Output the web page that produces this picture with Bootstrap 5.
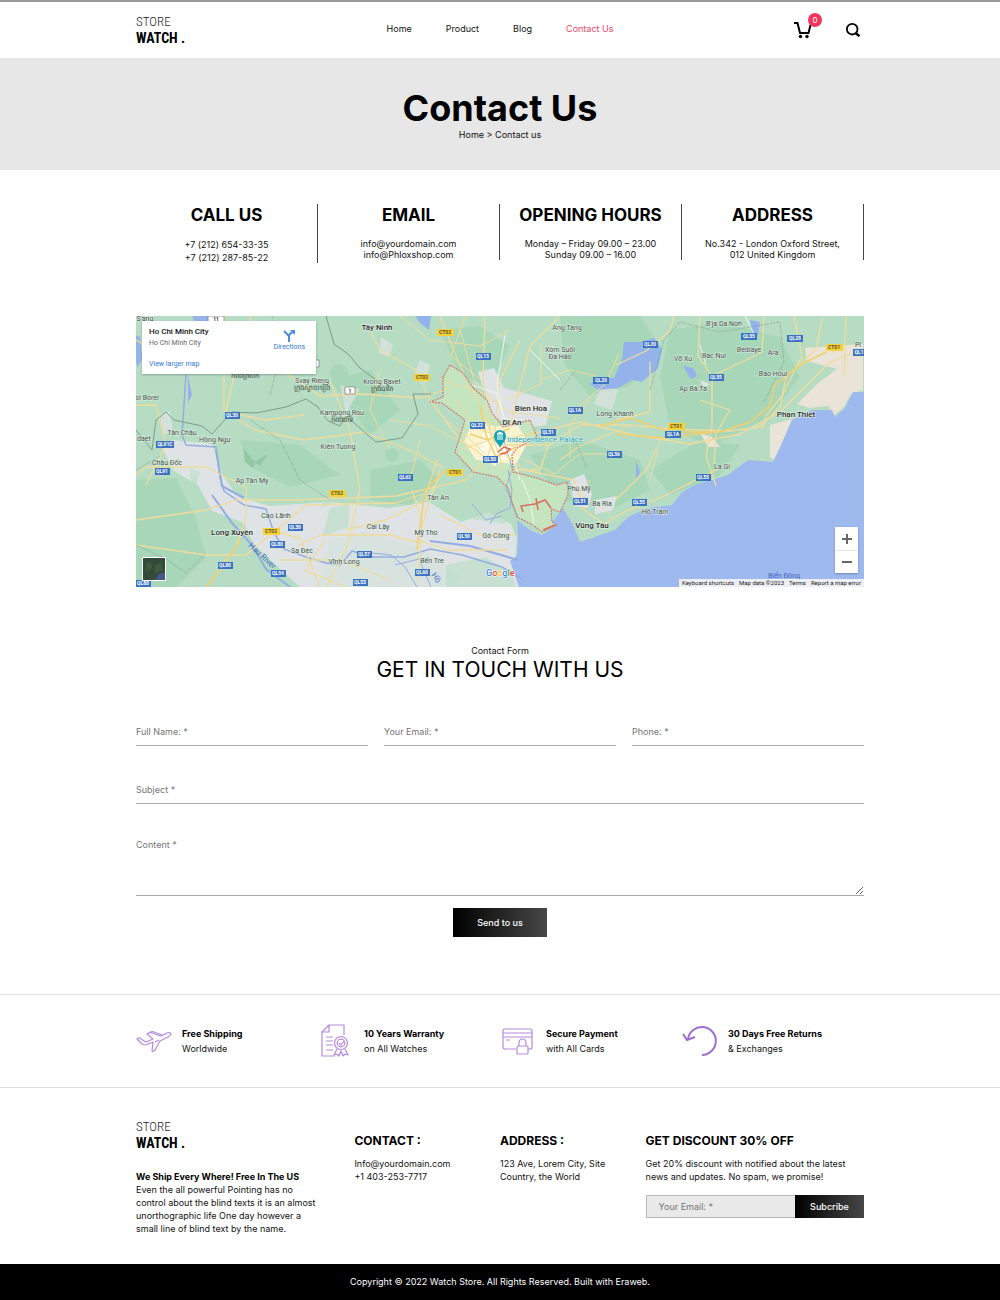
<!DOCTYPE html>
<html lang="en">
<head>
<meta charset="utf-8">
<meta name="viewport" content="width=device-width, initial-scale=1">
<title>Store Watch – Contact Us</title>
<link href="https://cdn.jsdelivr.net/npm/bootstrap@5.3.0/dist/css/bootstrap.min.css" rel="stylesheet">
<style>
  body { font-family: Inter, "Open Sans", sans-serif; font-size: 9px; line-height: 13px; color: #111; background: #fff; }
  a { color: inherit; text-decoration: none; }
  .shell { width: 100%; max-width: 728px; margin-inline: auto; }
  .site-head { border-top: 2px solid #999; height: 58px; }
  .brand { display: inline-block; font-family: "Liberation Sans Narrow", "Roboto Condensed", "Open Sans Condensed", "DejaVu Sans Condensed", sans-serif; font-size: 13px; line-height: 16px; font-weight: 300; color: #222; }
  .brand strong { display: block; font-size: 14px; font-weight: 700; color: #000; }
  .main-nav { gap: 34px; }
  .main-nav .nav-link { padding: 0; color: #111; }
  .main-nav .nav-link.active { color: #e8486b; }
  .icon-btn { border: 0; padding: 0; background: none; line-height: 0; position: relative; }
  .cart-count { position: absolute; left: 14px; top: -8px; width: 14px; height: 14px; border-radius: 50%; background: #f2355f; color: #fff; font-size: 8px; line-height: 14px; text-align: center; }
  .hero { background: #e7e7e8; height: 112px; padding-top: 30px; }
  .hero h1 { font-size: 36px; line-height: 40px; font-weight: 700; margin: 0; color: #000; }
  .info { padding-top: 34px; height: 146px; }
  .info-item { border-right: 1px solid #444; text-align: center; height: 56px; }
  .info-item h2 { font-size: 17px; line-height: 22px; font-weight: 700; margin: 0 0 12px; color: #000; }
  .info-item p { margin: 0; line-height: 11px; }
  .info-item.info-tall { height: 59px; }
  .info-item.info-tall p { line-height: 13px; }
  .map-box { position: relative; background: #b3dcc0; overflow: hidden; font-family: Roboto, sans-serif; }
  .map-box > svg { display: block; width: 100%; height: auto; }
  .map-card { position: absolute; left: 6px; top: 5px; width: 174px; height: 53px; padding: 5px 11px 4px 7px; background: #fff; box-shadow: 0 1px 2px #0004; font-size: 7px; line-height: 11px; color: #666; }
  .map-card b { font-size: 8px; line-height: 12px; font-weight: 500; color: #111; }
  .map-card a { color: #2f7bdc; }
  .map-thumb { position: absolute; left: 6px; bottom: 6px; width: 24px; height: 24px; border: 1px solid #fff; padding: 0; line-height: 0; }
  .map-zoom { position: absolute; right: 6px; bottom: 14px; width: 23px; background: #fff; box-shadow: 0 1px 2px #0004; }
  .map-zoom button { display: block; width: 23px; height: 23px; border: 0; padding: 5px; background: none; line-height: 0; }
  .map-zoom button + button { border-top: 1px solid #e6e6e6; }
  .map-legal { position: absolute; right: 0; bottom: 0; background: #eceef3; color: #222; font-size: 6px; line-height: 8px; padding: 0 3px; gap: 5px; }
  .form-area { padding-top: 57px; height: 407px; }
  .form-area h2 { font-size: 21px; line-height: 26px; font-weight: 400; margin: 0 0 34px; color: #000; }
  .line-field { display: block; width: 100%; border: 0; border-bottom: 1px solid #aaa; border-radius: 0; background: none; padding: 0; height: 29px; font-size: 9px; line-height: 13px; color: #111; outline: 0; }
  .line-field::placeholder, .mail-field::placeholder { color: #757575; opacity: 1; }
  .subject-field { margin-top: 29px; }
  .line-area { height: 61px; padding-top: 3px; margin-top: 31px; resize: vertical; }
  .dark-btn { border: 0; border-radius: 0; color: #fff; background: linear-gradient(90deg, #000, #474747); font-size: 9px; line-height: 13px; font-weight: 500; }
  .send-btn { width: 94px; height: 29px; margin-top: 12px; }
  .perks { border-top: 1px solid #ddd; border-bottom: 1px solid #ddd; height: 94px; padding-top: 28px; }
  .perk-icon { width: 46px; height: 36px; flex: none; fill: none; stroke: #b48add; }
  .perk-text { line-height: 15px; padding-top: 3px; }
  .perk-text b { font-weight: 700; color: #000; display: block; }
  .foot { padding-top: 31px; height: 176px; }
  .foot-logo-col { width: 30%; }
  .foot-col { width: 20%; padding-top: 15px; }
  .foot-news { width: 30%; padding-top: 15px; }
  .foot h3 { font-size: 12px; line-height: 14px; font-weight: 700; margin: 0 0 9px; color: #000; }
  .foot p { margin: 0; }
  .ship-note { padding-top: 3px; }
  .mail-field { flex: 1 1 0; min-width: 0; height: 23px; border: 1px solid #bbb; border-right: 0; border-radius: 0; background: #e9e9e9; padding: 0 12px; font-size: 9px; }
  .sub-btn { width: 69px; height: 23px; }
  .copy { background: #000; color: #fff; height: 36px; line-height: 36px; text-align: center; }
</style>
<script src="https://cdn.jsdelivr.net/npm/bootstrap@5.3.0/dist/js/bootstrap.bundle.min.js"></script>
</head>
<body>
<header class="site-head">
  <div class="shell d-flex pt-2">
    <div class="flex-fill w-25 pt-1"><a class="brand" href="#">STORE<strong>WATCH .</strong></a></div>
    <nav class="nav main-nav justify-content-center align-items-center">
      <a class="nav-link" href="#">Home</a>
      <a class="nav-link" href="#">Product</a>
      <a class="nav-link" href="#">Blog</a>
      <a class="nav-link active" href="#" aria-current="page">Contact Us</a>
    </nav>
    <div class="flex-fill w-25 d-flex justify-content-end align-items-center pe-1 pt-1">
      <button class="icon-btn me-4" type="button" aria-label="Cart">
        <svg width="28" height="18" viewBox="0 0 28 18" fill="none" stroke="#000" stroke-width="2"><path d="M0 2h3.500l2.500 10h8.500l2-8"/><circle cx="6.500" cy="15.500" r="1.700" fill="#000" stroke="none"/><circle cx="13" cy="15.500" r="1.700" fill="#000" stroke="none"/></svg>
        <span class="cart-count">0</span>
      </button>
      <button class="icon-btn" type="button" aria-label="Search">
        <svg width="14" height="14" viewBox="0 0 14 14" fill="none" stroke="#000" stroke-width="1.800"><circle cx="6.200" cy="6.200" r="5.300"/><path d="M9.500 10l4 3.200" stroke-width="2.400"/></svg>
      </button>
    </div>
  </div>
</header>

<section class="hero text-center">
  <h1>Contact Us</h1>
  <nav aria-label="Breadcrumb"><a href="#">Home</a> &gt; <span>Contact us</span></nav>
</section>

<main>
  <section class="shell info">
    <div class="row g-0 align-items-start">
      <div class="col-3 info-item info-tall"><h2>CALL US</h2><p>+7 (212) 654-33-35<br>+7 (212) 287-85-22</p></div>
      <div class="col-3 info-item"><h2>EMAIL</h2><p>info@yourdomain.com<br>info@Phloxshop.com</p></div>
      <div class="col-3 info-item"><h2>OPENING HOURS</h2><p>Monday – Friday 09.00 – 23.00<br>Sunday 09.00 – 16.00</p></div>
      <div class="col-3 info-item"><h2>ADDRESS</h2><p>No.342 - London Oxford Street,<br>012 United Kingdom</p></div>
    </div>
  </section>

  <section class="shell map-box" aria-label="Map of Ho Chi Minh City">
    <svg viewBox="136 316 728 271" font-family="Roboto, 'Noto Sans', sans-serif">
      <rect x="136" y="316" width="728" height="271" fill="#b6ddc4"/>
      <!-- forests -->
      <g fill="#a8d6b9">
        <path d="M560 316h80l20 30-30 40-40 10-25-30zM670 330l50-8 60 15 20 40-30 40-60 30-40-20-10-50zM440 330l40-4 30 20-20 40-30-10z"/>
        <path d="M136 480l40-2 20 40 10 40-30 29h-40zM240 440l60 5 40 30-50 12-40-20zM330 380l40-10 30 40-30 25zM530 455l50-15 60 20 10 30-40 20-50-10zM650 470l50-30 40 5-20 30-50 20zM370 470l50-10 20 20-30 25-40-5z"/>
        <circle cx="392" cy="455" r="7"/><circle cx="339" cy="373" r="9"/><circle cx="462" cy="350" r="10"/>
        <path d="M243 448l12 14-2 6-8-6zM268 454l-8 12-6-4z" fill="#93c8a6"/>
      </g>
      <!-- farmland and delta -->
      <g fill="#e0e3e5">
        <path d="M162 448l10-8 40 4 10 30 15 22 32 10 60-4 60 6 40-6 32 20 28-10 22 12 6 15-2 20 4 28H300l-46-42-10-22-32-12-14-26-24-14z"/>
        <path d="M478 372l16-4 10 20 20 5 28 8-6 24-30 4-24-14zM700 380l10 4-6 4zM570 480l14-6 8 20-4 14-14-2zM595 500l22-4-4 14-18 4z"/>
        <path d="M420 360l10 5-4 18-12-8zM160 415l10-4 3 20-10 4zM340 385l20 4-14 24zM602 384l16 6-6 20-18-6zM381 337l12 8-4 12-10-4z" opacity=".7"/>
      </g>
      <path d="M321 508l14-6-10-6zM190 468l10 4-4 16-6-6zM330 508l20-5-2 24-26 10zM440 480l60-8 18 28-14 24-52-8-20-20z" fill="#b6ddc4" opacity=".6"/>
      <path d="M330 540l36-8 50 14 46 30-14 11h-130z" fill="#c8e0d0" opacity=".3"/>
      <path d="M446 565l40-8 26 18 4 12h-70z" fill="#b6ddc4" opacity=".6"/>
      <!-- beaches -->
      <g fill="#e9e3d8"><path d="M805 348l58-4v46l-12 4-8 14-10 8-4-10-20 2-12-4 20-20 20-15-30-8zM770 425l22-6-10 24-6 18-6-4zM700 433l12 4 8 10-12 0z"/></g>
      <!-- sea -->
      <path d="M864 392l-11 0-8 16-10 9-3-7-20 0-20 10-10 23-9 19-25-2-20 15-33 10-13 7-10 13-24 3-20 9-13 13-35 12-7-17-10-17-13 17 7 0-15 10-12-5-13-10 1 15-1 21-7 5 10 29h344z" fill="#9db9ee"/>
      <!-- Ho Chi Minh City -->
      <path d="M443 377L450 365 463 373 473 388 487 400 492 413 503 427 530 420 537 437 517 448 512 455 513 472 537 478 557 485 567 482 568 495 560 512 551 509 552 522 557 525 542 532 533 525 517 517 512 502 508 488 497 477 473 472 455 452 465 420 442 403 430 402 443 397z" fill="#c4e5c0"/>
      <path d="M472 422l22 4 24 0 10 16-12 22-40-4-12-18z" fill="#fbf3cf"/>
      <path d="M484 432l22 0 6 22-18 12-14-14z" fill="#fffbe9"/>
      <!-- lakes -->
      <path d="M624 342l16 0 14-4 8 12-4 18-16 14-10-2-14 8-20 2-8-6 8-6 16 0 8-18zM683 366l10 2 4 8-6 3zM636 460l4 12-4 8zM750 320l10 2-2 14-6-4zM415 316h16l-2 14-8-6zM192 316h20l-4 5h-14zM136 335l4 2 2 22-4 8-2-5zM188 375l4 20-4 8z" fill="#94b3ea"/>
      <!-- rivers -->
      <g fill="none" stroke="#94ade0">
        <path d="M186 375l-4 60 4 10 30 2 4 30 4 14 20 14 22 4 8 24 10 16 22 8 20 6 14 2 12-14 20 6 32 0 26-8 32 6 40 12 20 12" stroke-width="1.500"/>
        <path d="M212 495l20 28 20 22 14 24 24 18M216 450l6 36 22 12M430 541l40 5 48 14" stroke-width="2"/>
        <path d="M371 553l20 2 14 12 12 20M395 565l24-6 12 28M508 470l4 20-2 18-14 6-6 10M472 504l14 16 16-4M504 440l8 28-6 20 12 30" stroke-width="1"/>
      </g>
      <!-- roads -->
      <g fill="none" stroke="#efdc9c" stroke-width="1.300" stroke-linejoin="round">
        <path d="M136 340l50 30 38 0 0 40 30 20 50 10 60-8 50 20 30 16M224 316l10 60-8 36 40 8 38-5M136 520l70-10 30-10 60 0 100-4 70-16 20-20 12-30M136 545l70 10 40 0 60-50 90-2 30-10 12-34M206 587l30-40 10-30 0-30-40-20-60 0-10 8"/>
        <path d="M250 316l10 40 60 40 40-2 60 4 30-10M330 380l20 50 10 60-14 60-20 37M370 330l10 20 36 20 14 30 30 40 30 20M440 316l20 50 20 40 16 40M485 316l-2 60 8 60M520 340l-20 40-6 60 10 30M560 316l-30 30-10 40-10 40"/>
        <path d="M500 440l40-8 40-10 50 12 60 10 50-10 40-22 30-30 20-20 26-10M500 445l50 0 30-20 50 0 40 4 60 2 30-4 20-20 6-30 30-28 6-30M560 460l20-14 50-20M616 365l30-14 24-20 4-15M700 316l-2 40 14 20 0 50-6 30 10 30M712 376l30-14 20-10 2-36M700 400l30 10-14 24-2 30M794 316l8 40-20 40-16 20-4 14M846 316l-2 60M616 420l34-8 0-50"/>
        <path d="M500 450l24 20 50 10 10 30 20 14 20-12 40-16 40-20 24-12M550 440l-10 30-30 0M616 500l30-30 10-20M412 490l10 30-4 60M440 470l-10 30-12 40 30 10 60 0M346 530l40-10 40-20 18-30M300 545l20-10 70 0 30 8M280 560l60 0 50 20M325 540l-20 30 40 17M270 530l30 8 20 49M440 515l40 20 34 0M136 405l20 0 10 40-20 40"/>
        <path d="M460 330l14 50 30 30M440 380l40 12 30 20 50 6M540 380l30-10 26 6M456 400l24 30 20 6M460 450l30-10 40 4M445 420l20 14 20 20M575 410l30-26 14-30M400 316l30 24 50 6 30-16M390 420l40 6 30 16M380 370l-10 40 20 40M420 440l-10 40M465 316l-14 40 30 24M505 400l36-16 0-40M525 460l30 14 24-20 30 0M590 480l-10 14 30 20M660 440l-10 40M590 400l-20 24 0 34" stroke-width="1"/>
      </g>
      <g fill="none" stroke="#f1cf6e" stroke-width="1.500"><path d="M600 426l30-8 40 14 50 0 30-10 20-16 4-20 28-22 24-12M445 470l-20 20-8 60M206 587l20-26 14-20M480 405l6 30 10 22 20-10M616 434l50 4 46-6M470 434l18 6 22-12"/></g>
      <g fill="none" stroke="#eef7ee" stroke-width="1"><path d="M505 335l-8 50 6 30M530 350l30 30M700 345l6 20M522 480l8 20 4 26M520 480l-6-20M472 385l24 8 10 30M745 316l10 20"/></g>
      <!-- borders -->
      <g fill="none" stroke="#7d9c8b" stroke-width="1">
        <path d="M326 316l8 28 14 10 12 14 16 12M136 430l16 20 4-30 10-8 8 8 28 6 10 8 20-22 24 1 30-6 20-8 12 8 10 14 12 5 6-10 30 26 26-4 16-24-5-20 18 0"/>
        <path d="M270 395l10-40-8-39M250 420l30 20 20 40 30 20M136 545l30 14 20 14 20-20M560 390l16-20M650 390l14-50 16-18 40 10 60-10 4 40-20 40M575 440l12 28M136 470l24-14" stroke-dasharray="5 1" opacity=".5"/>
      </g>
      <path d="M443 377L450 365 463 373 473 388 487 400 492 413 503 427 530 420 537 437 517 448 512 455 513 472 537 478 557 485 567 482 568 495 560 512 551 509 552 522 557 525 542 532 533 525 517 517 512 502 508 488 497 477 473 472 455 452 465 420 442 403 430 402 443 397z" fill="none" stroke="#cf7a74" stroke-width="1.200" stroke-dasharray="2 1"/>
      <path d="M498 452l6-5 6 2-4 4-6 1M523 512l-2-6 14-2 10-4 6 8M536 498l2 12M543 530l12-5" fill="none" stroke="#dc6a5c" stroke-width="1.500"/>
      <!-- road shields -->
      <g font-size="5" font-weight="700" text-anchor="middle">
        <path d="M225 412h15v7h-15zM156 441h18v7h-18zM155 468h15v7h-15zM288 524h15v7h-15zM270 541h15v7h-15zM218 562h15v7h-15zM271 570h15v7h-15zM357 551h15v7h-15zM353 579h15v7h-15zM136 580h15v7h-15zM476 353h15v7h-15zM470 422h15v7h-15zM483 456h15v7h-15zM541 429h15v7h-15zM568 407h15v7h-15zM593 377h16v7h-16zM643 341h15v7h-15zM741 333h16v7h-16zM787 335h16v7h-16zM709 374h15v7h-15zM665 431h16v7h-16zM607 451h15v7h-15zM398 474h15v7h-15zM457 533h15v7h-15zM415 569h15v7h-15zM573 498h15v7h-15zM632 499h15v7h-15zM696 474h15v7h-15zM853 349h11v7h-11z" fill="#3c73c0"/>
        <g fill="#fff">
          <text x="232" y="417">QL30</text><text x="165" y="446">QL91C</text><text x="162" y="473">QL91</text><text x="295" y="529">QL30</text><text x="277" y="546">QL80</text><text x="225" y="567">QL80</text><text x="278" y="575">QL54</text><text x="364" y="556">QL57</text><text x="360" y="584">QL53</text><text x="143" y="585">QL80</text><text x="483" y="358">QL13</text><text x="477" y="427">QL22</text><text x="490" y="461">QL50</text><text x="548" y="434">QL51</text><text x="575" y="412">QL1A</text><text x="601" y="382">QL20</text><text x="650" y="346">QL20</text><text x="749" y="338">QL55</text><text x="795" y="340">QL28</text><text x="716" y="379">QL55</text><text x="673" y="436">QL1A</text><text x="614" y="456">QL56</text><text x="405" y="479">QL62</text><text x="464" y="538">QL50</text><text x="422" y="574">QL60</text><text x="580" y="503">QL51</text><text x="639" y="504">QL55</text><text x="703" y="479">QL55</text><text x="859" y="354">QL1</text>
        </g>
        <path d="M437 329h17v7h-17zM414 374h16v7h-16zM447 469h16v7h-16zM329 490h17v7h-17zM263 528h17v7h-17zM668 423h17v7h-17zM826 344h17v7h-17z" fill="#f5d23c"/>
        <g fill="#5c5120"><text x="445" y="334">CT02</text><text x="422" y="379">CT02</text><text x="455" y="474">CT01</text><text x="337" y="495">CT02</text><text x="271" y="533">CT02</text><text x="676" y="428">CT01</text><text x="834" y="349">CT01</text></g>
        <path d="M345 387h10v7h-10zM310 360h9v7h-9z" fill="#fff" stroke="#777" stroke-width=".7"/><text x="350" y="393" fill="#333">1</text><text x="315" y="366" fill="#333">3</text>
        <path d="M208 316h16v6h-16z" fill="#fff" stroke="#777" stroke-width=".7"/><text x="216" y="321" fill="#333">11</text>
      </g>
      <!-- place names -->
      <g font-size="7" fill="#3d4a45" stroke="#e4f2e8" stroke-width="1" paint-order="stroke" text-anchor="middle">
        <text x="145" y="321">S'ang</text><text x="567" y="330">Ang Tang</text><text x="560" y="352">Xóm Suối</text><text x="560" y="359">Đa Hào</text><text x="724" y="326">B'ja Da Noh</text><text x="683" y="361">Võ Xu</text><text x="714" y="358">Bac Nui</text><text x="749" y="352">Bediaye</text><text x="773" y="355">Ara</text><text x="773" y="376">Bao Houi</text><text x="693" y="391">Ap Bà Tá</text><text x="615" y="416">Long Khanh</text><text x="858" y="347">Pl</text>
        <text x="312" y="383">Svay Rieng</text><text x="382" y="384">Krong Bavet</text><text x="342" y="415">Kampong Rou</text><text x="338" y="449">Kiên Tuong</text><text x="182" y="435">Tân Châu</text><text x="215" y="442">Hồng Ngự</text><text x="147" y="400">oi Borei</text><text x="144" y="441">daet</text><text x="167" y="465">Châu Đốc</text><text x="252" y="483">Ap Tân My</text><text x="276" y="518">Cao Lãnh</text><text x="302" y="553">Sa Đéc</text><text x="344" y="564">Vĩnh Long</text><text x="378" y="529">Cai Lậy</text><text x="438" y="500">Tân An</text><text x="426" y="535">Mỹ Tho</text><text x="432" y="563">Bến Tre</text><text x="496" y="538">Gò Công</text><text x="579" y="491">Phú Mỹ</text><text x="602" y="506">Bà Ria</text><text x="655" y="514">Hồ Tràm</text><text x="722" y="469">La Gi</text>
        <g font-size="7" stroke="none"><text x="312" y="390">ក្រុងស្វាយរៀង</text><text x="382" y="391">ក្រុងបាវិត</text><text x="342" y="422">កំពង់រោទ៍</text><text x="245" y="378">កំពង់ត្របែក</text></g>
      </g>
      <g font-size="8" font-weight="500" fill="#1c2523" stroke="#eef6ef" stroke-width="1" paint-order="stroke" text-anchor="middle">
        <text x="377" y="330">Tây Ninh</text><text x="531" y="411">Bien Hoa</text><text x="512" y="425">Dĩ An</text><text x="796" y="417">Phan Thiet</text><text x="232" y="535">Long Xuyên</text><text x="592" y="528">Vũng Tàu</text>
      </g>
      <text x="507" y="442" font-size="8" fill="#1d9db0" stroke="#e8f6f2" stroke-width="1" paint-order="stroke">Independence Palace</text>
      <path d="M500 448c-1-4-6-6-6-12a6 6 0 0 1 12 0c0 6-5 8-6 12z" fill="#12a4b4"/><path d="M497 439h6M498 435v3M500 435v3M502 435v3M497 434l3-2 3 2z" stroke="#fff" stroke-width="1" fill="#fff"/>
      <text x="248" y="546" font-size="8" fill="#4470c4" transform="rotate(43 248 546)">Hau River</text>
      <text x="431" y="575" font-size="8" fill="#4470c4" transform="rotate(55 431 575)">Hồ</text>
      <text x="768" y="578" font-size="7" fill="#3f66bd">Biển Đông</text>
      <text x="486" y="576" font-size="9" font-weight="500" stroke="#fff" stroke-width="1" paint-order="stroke"><tspan fill="#4285f4">G</tspan><tspan fill="#ea4335">o</tspan><tspan fill="#fbbc05">o</tspan><tspan fill="#4285f4">g</tspan><tspan fill="#34a853">l</tspan><tspan fill="#ea4335">e</tspan></text>
    </svg>
    <div class="map-card d-flex justify-content-between">
      <div class="d-flex flex-column"><b>Ho Chi Minh City</b><span>Ho Chi Minh City</span><a class="mt-auto" href="#">View larger map</a></div>
      <a class="text-center pt-1" href="#"><svg class="d-block mx-auto" width="12" height="12" viewBox="0 0 12 12"><path d="M1 1l5 5v6M6 7c0-3 1-4 4-5" fill="none" stroke="#4a8ce0" stroke-width="2"/><path d="M7 0h5v5z" fill="#4a8ce0"/></svg>Directions</a>
    </div>
    <button class="map-thumb" type="button" aria-label="Satellite view"><svg width="22" height="22" viewBox="0 0 22 22"><path d="M0 0h22v22H0z" fill="#33493a"/><path d="M4 4l6 2-2 6-6 2zM12 8l6-4 2 8-8 4z" fill="#3d5a3f"/><path d="M12 22l4-6 6-2v8z" fill="#405a86"/></svg></button>
    <div class="map-zoom">
      <button type="button" aria-label="Zoom in"><svg width="12" height="12" viewBox="0 0 12 12"><path d="M1 6h10M6 1v10" stroke="#666" stroke-width="2"/></svg></button>
      <button type="button" aria-label="Zoom out"><svg width="12" height="12" viewBox="0 0 12 12"><path d="M1 6h10" stroke="#666" stroke-width="2"/></svg></button>
    </div>
    <div class="map-legal d-flex"><span>Keyboard shortcuts</span><span>Map data ©2023</span><a href="#">Terms</a><a href="#">Report a map error</a></div>
  </section>

  <section class="shell form-area">
    <div class="text-center">Contact Form</div>
    <h2 class="text-center">GET IN TOUCH WITH US</h2>
    <form>
      <div class="d-flex">
        <div class="flex-fill"><input class="line-field" type="text" aria-label="Full Name" placeholder="Full Name: *"></div>
        <div class="flex-fill mx-3"><input class="line-field" type="email" aria-label="Your Email" placeholder="Your Email: *"></div>
        <div class="flex-fill"><input class="line-field" type="tel" aria-label="Phone" placeholder="Phone: *"></div>
      </div>
      <input class="line-field subject-field" type="text" aria-label="Subject" placeholder="Subject *">
      <textarea class="line-field line-area" aria-label="Content" placeholder="Content *"></textarea>
      <button class="dark-btn send-btn d-block mx-auto" type="submit">Send to us</button>
    </form>
  </section>
</main>

<section class="perks">
  <div class="shell row g-0">
    <div class="col-3 d-flex"><svg class="perk-icon" viewBox="0 0 46 36" stroke-width="1.200" stroke-linejoin="round"><path d="M1 16q2-2 4 0l5 3 7-3L11 11q2-2 5-1l9 3 6-3q4-1 4 1 0 1-3 3l-8 4-5 9q-2 2-3 1l1-9-7 3q-2 0-4-1z"/><path d="M13 10q2-2 5-1l8 3M19 19l4-2"/></svg><div class="perk-text"><b>Free Shipping</b>Worldwide</div></div>
    <div class="col-3 d-flex"><svg class="perk-icon" viewBox="0 0 46 36" stroke-width="1.200" stroke-linejoin="round"><path d="M17 33H4V9l7-7h15v10M11 2v7H4M8 14h7M8 18h7M8 22h7M8 27h7"/><circle cx="23" cy="20" r="6.500"/><circle cx="23" cy="20" r="3.800"/><path d="M21 20l2 2 3-4M19 26l-3 6 3-1 2 2 2-5 2 5 2-2 3 1-3-6"/></svg><div class="perk-text"><b>10 Years Warranty</b>on All Watches</div></div>
    <div class="col-3 d-flex"><svg class="perk-icon" viewBox="0 0 46 36" stroke-width="1.200" stroke-linejoin="round"><path d="M16 26H5q-2 0-2-2V8q0-2 2-2h25q2 0 2 2v16q0 2-2 2h-2M3 10h29M3 14h29M6 17h4"/><rect x="17" y="23" width="11" height="8" rx="1" fill="#fff"/><path d="M19 23v-3q0-4 3.500-4t3.500 4v3"/></svg><div class="perk-text"><b>Secure Payment</b>with All Cards</div></div>
    <div class="col-3 d-flex"><svg class="perk-icon" viewBox="0 0 46 36" stroke-width="2"><path d="M6 16A14 14 0 1 1 20 32M1 11l4 6 8-3" stroke="#9d6fd0"/></svg><div class="perk-text"><b>30 Days Free Returns</b>&amp; Exchanges</div></div>
  </div>
</section>

<footer>
  <div class="shell foot d-flex">
    <div class="foot-logo-col">
      <a class="brand mb-3" href="#">STORE<strong>WATCH .</strong></a>
      <p class="ship-note"><b class="text-black">We Ship Every Where! Free In The US</b><br>Even the all powerful Pointing has no<br>control about the blind texts it is an almost<br>unorthographic life One day however a<br>small line of blind text by the name.</p>
    </div>
    <div class="foot-col"><h3>CONTACT :</h3><p>Info@yourdomain.com<br>+1 403-253-7717</p></div>
    <div class="foot-col"><h3>ADDRESS :</h3><p>123 Ave, Lorem City, Site<br>Country, the World</p></div>
    <div class="foot-news"><h3>GET DISCOUNT 30% OFF</h3><p>Get 20% discount with notified about the latest<br>news and updates. No spam, we promise!</p>
      <form class="d-flex mt-2 pt-1"><input class="mail-field" type="email" aria-label="Your Email" placeholder="Your Email: *"><button class="dark-btn sub-btn" type="submit">Subcribe</button></form>
    </div>
  </div>
  <div class="copy">Copyright © 2022 Watch Store. All Rights Reserved. Built with Eraweb.</div>
</footer>
</body>
</html>
